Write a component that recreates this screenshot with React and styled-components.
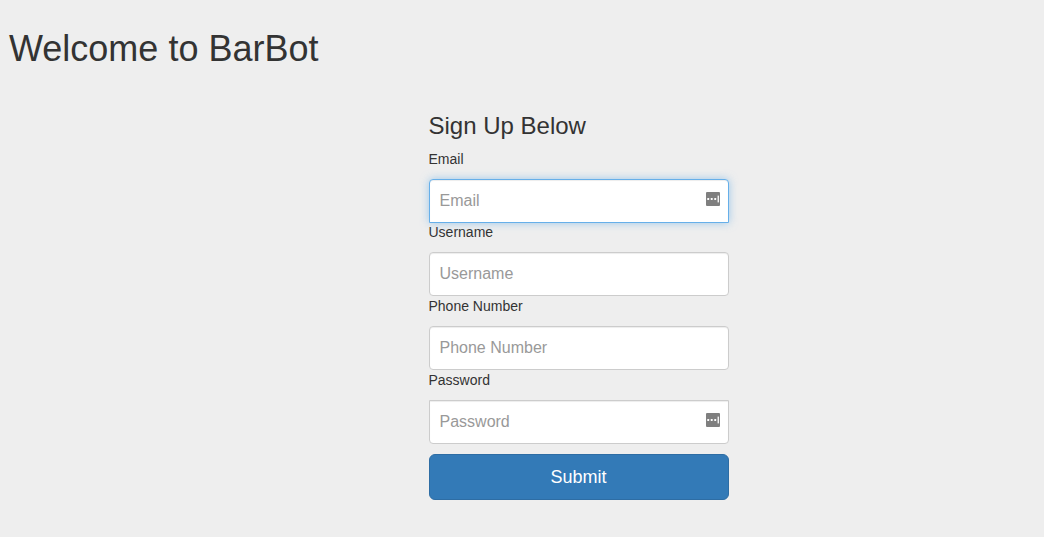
import React from "react";
import styled, { createGlobalStyle, css } from "styled-components";

const GlobalStyle = createGlobalStyle`
  *, *::before, *::after {
    box-sizing: border-box;
  }
  body {
    margin: 0;
    background: #eee;
    color: #333;
    font-family: "Liberation Sans", Arial, sans-serif;
    font-size: 14px;
    line-height: 20px;
  }
`;

const Page = styled.div`
  padding: 29px 0 32px;
`;

const Title = styled.h1`
  margin: 0 9px;
  font-size: 36px;
  font-weight: 400;
  line-height: 40px;
`;

const Main = styled.main`
  display: flex;
  justify-content: center;
  margin-top: 44px;
  padding-left: 113px;
`;

const Form = styled.form`
  width: 100%;
  max-width: 300px;
`;

const FormHeading = styled.h2`
  margin: 0 0 10px;
  font-size: 24px;
  font-weight: 400;
  line-height: 26px;
`;

const Label = styled.label`
  display: block;
  margin-bottom: 10px;
`;

const radii = {
  top: "4px 4px 0 0",
  all: "4px",
  bottom: "0 0 4px 4px",
};

const Field = styled.div`
  position: relative;
  margin-bottom: ${({ $overlap, $last }) => ($overlap ? "-1px" : $last ? "10px" : "0")};
`;

const activeStyle = css`
  border-color: #66afe9;
  box-shadow: inset 0 1px 1px rgba(0, 0, 0, 0.075), 0 0 8px rgba(102, 175, 233, 0.6);
`;

const Input = styled.input`
  display: block;
  width: 100%;
  height: 44px;
  margin: 0;
  padding: 10px;
  border: 1px solid #ccc;
  border-radius: ${({ $corners }) => radii[$corners]};
  background: #fff;
  box-shadow: inset 0 1px 1px rgba(0, 0, 0, 0.075);
  color: #555;
  font-family: inherit;
  font-size: 16px;
  outline: 0;

  &::placeholder {
    color: #999;
    opacity: 1;
  }

  ${({ $active }) => $active && activeStyle}

  &:focus {
    ${activeStyle}
  }
`;

const FillIcon = styled.svg`
  position: absolute;
  top: 13px;
  right: 9px;
  width: 14px;
  height: 14px;
`;

const SubmitButton = styled.button`
  display: block;
  width: 100%;
  height: 46px;
  padding: 10px 16px;
  border: 1px solid #2e6da4;
  border-radius: 6px;
  background: #337ab7;
  color: #fff;
  font-family: inherit;
  font-size: 18px;
  line-height: 24px;
  cursor: pointer;
`;

const fields = [
  { id: "email", type: "email", label: "Email", corners: "top", active: true, icon: true, overlap: true },
  { id: "username", type: "text", label: "Username", corners: "all" },
  { id: "phone", type: "tel", label: "Phone Number", corners: "all" },
  { id: "password", type: "password", label: "Password", corners: "bottom", icon: true, last: true },
];

function AutofillIcon() {
  return (
    <FillIcon viewBox="0 0 14 14" aria-hidden="true">
      <rect width="14" height="14" rx="1" fill="#7f7f7f" />
      <g fill="#fff">
        <rect x="1.2" y="6" width="2" height="2" rx="0.4" />
        <rect x="4.7" y="6" width="2" height="2" rx="0.4" />
        <rect x="8.2" y="6" width="2" height="2" rx="0.4" />
        <rect x="11.6" y="3.6" width="1.3" height="6.8" />
      </g>
    </FillIcon>
  );
}

export default function App() {
  return (
    <>
      <GlobalStyle />
      <Page>
        <Title>Welcome to BarBot</Title>
        <Main>
          <Form onSubmit={(event) => event.preventDefault()}>
            <FormHeading>Sign Up Below</FormHeading>
            {fields.map((field) => (
              <React.Fragment key={field.id}>
                <Label htmlFor={field.id}>{field.label}</Label>
                <Field $overlap={field.overlap} $last={field.last}>
                  <Input
                    id={field.id}
                    name={field.id}
                    type={field.type}
                    placeholder={field.label}
                    $corners={field.corners}
                    $active={field.active}
                  />
                  {field.icon && <AutofillIcon />}
                </Field>
              </React.Fragment>
            ))}
            <SubmitButton type="submit">Submit</SubmitButton>
          </Form>
        </Main>
      </Page>
    </>
  );
}
